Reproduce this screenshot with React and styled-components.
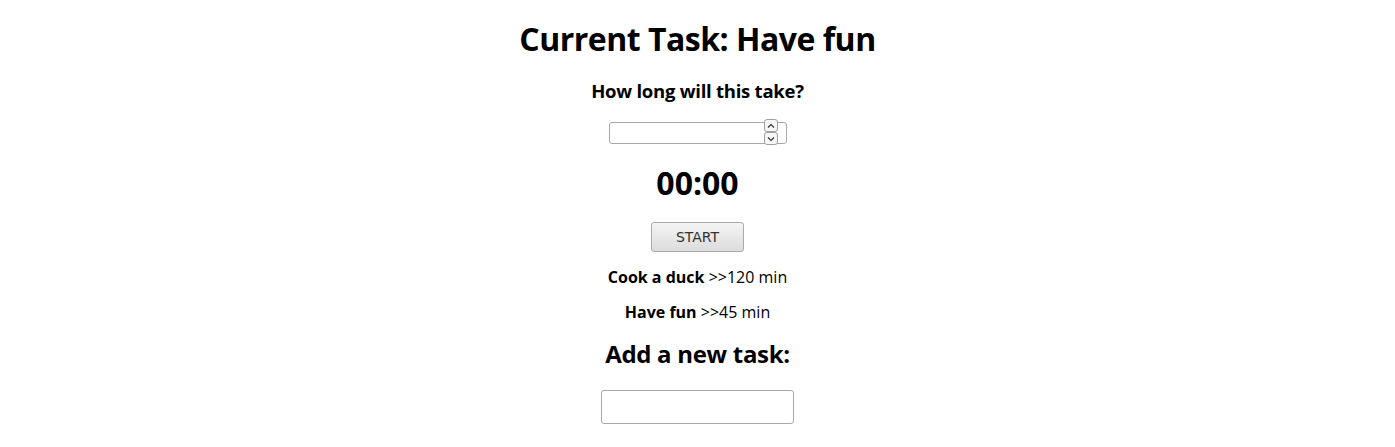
import React from "react";
import styled, { createGlobalStyle } from "styled-components";

const Global = createGlobalStyle`
  body { margin: 0; background: #fff; font-family: "Open Sans", "Noto Sans", sans-serif; color: #000; }
`;

const Page = styled.div`
  display: flex;
  flex-direction: column;
  align-items: center;
  padding-top: 17px;
`;

const Title = styled.h1`
  font-size: 32px;
  font-weight: 700;
  margin: 0;
  line-height: 44px;
  letter-spacing: -0.5px;
`;

const Question = styled.h3`
  font-size: 18.5px;
  font-weight: 700;
  margin: 17px 0 0;
  line-height: 26px;
  letter-spacing: -0.25px;
`;

const SpinWrap = styled.div`
  position: relative;
  margin-top: 17px;
  width: 178px;
  height: 22px;
`;

const NumberBox = styled.input`
  box-sizing: border-box;
  width: 100%;
  height: 100%;
  border: 1px solid #a8a8a8;
  border-radius: 3px;
  padding: 0 4px;
  font: 14px "DejaVu Sans", sans-serif;
  outline: none;
`;

const Spinner = styled.div`
  position: absolute;
  left: 155px;
  top: -2px;
  display: flex;
  flex-direction: column;
`;

const SpinBtn = styled.div`
  width: 12px;
  height: 11px;
  border: 1px solid #a0a0a0;
  border-radius: 3px;
  background: #f6f6f6;
  display: flex;
  align-items: center;
  justify-content: center;
`;

const Clock = styled.div`
  font-size: 32px;
  font-weight: 700;
  line-height: 44px;
  margin-top: 18px;
`;

const StartButton = styled.button`
  margin-top: 17px;
  width: 93px;
  height: 30px;
  border: 1px solid #a9a9a9;
  border-radius: 3px;
  background: linear-gradient(#f4f4f4, #dcdcdc);
  color: #333;
  font: 14px "DejaVu Sans", sans-serif;
  padding: 0;
  cursor: pointer;
`;

const Task = styled.p`
  margin: ${(p) => (p.$first ? "14px" : "13px")} 0 0;
  font-size: 16px;
  line-height: 22px;
`;

const TaskName = styled.b`
  font-weight: 700;
`;

const SubTitle = styled.h2`
  font-size: 24px;
  font-weight: 700;
  margin: 14px 0 0;
  line-height: 34px;
  letter-spacing: -0.3px;
`;

const TextBox = styled.input`
  box-sizing: border-box;
  margin-top: 19px;
  width: 193px;
  height: 34px;
  border: 1px solid #a8a8a8;
  border-radius: 3px;
  outline: none;
`;

const Chevron = ({ up }) => (
  <svg width="8" height="6" viewBox="0 0 8 6">
    <path
      d={up ? "M1 4.5 L4 1.5 L7 4.5" : "M1 1.5 L4 4.5 L7 1.5"}
      fill="none"
      stroke="#333"
      strokeWidth="1.2"
    />
  </svg>
);

export default function App() {
  return (
    <>
      <Global />
      <Page>
        <Title>Current Task: Have fun</Title>
        <Question>How long will this take?</Question>
        <SpinWrap>
          <NumberBox type="text" />
          <Spinner>
            <SpinBtn>
              <Chevron up />
            </SpinBtn>
            <SpinBtn>
              <Chevron />
            </SpinBtn>
          </Spinner>
        </SpinWrap>
        <Clock>00:00</Clock>
        <StartButton>START</StartButton>
        <Task $first>
          <TaskName>Cook a duck</TaskName> &gt;&gt;120 min
        </Task>
        <Task>
          <TaskName>Have fun</TaskName> &gt;&gt;45 min
        </Task>
        <SubTitle>Add a new task:</SubTitle>
        <TextBox type="text" />
      </Page>
    </>
  );
}
